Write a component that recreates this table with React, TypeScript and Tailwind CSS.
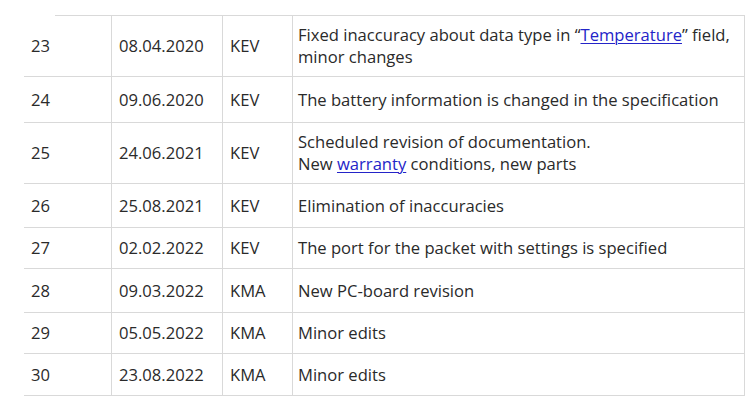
import React from "react";

type Row = { n: string; d: string; a: string; h: string; c: React.ReactNode };

const link = "text-[#2424c8] underline underline-offset-2 decoration-1";

const rows: Row[] = [
  {
    n: "23",
    d: "08.04.2020",
    a: "KEV",
    h: "h-[61px]",
    c: (
      <>
        Fixed inaccuracy about data type in “<span className={link}>Temperature</span>” field,
        <br />
        minor changes
      </>
    ),
  },
  { n: "24", d: "09.06.2020", a: "KEV", h: "h-[46px]", c: "The battery information is changed in the specification" },
  {
    n: "25",
    d: "24.06.2021",
    a: "KEV",
    h: "h-[61px]",
    c: (
      <>
        Scheduled revision of documentation.
        <br />
        New <span className={link}>warranty</span> conditions, new parts
      </>
    ),
  },
  { n: "26", d: "25.08.2021", a: "KEV", h: "h-[44px]", c: "Elimination of inaccuracies" },
  { n: "27", d: "02.02.2022", a: "KEV", h: "h-[41px]", c: "The port for the packet with settings is specified" },
  { n: "28", d: "09.03.2022", a: "KMA", h: "h-[44px]", c: "New PC-board revision" },
  { n: "29", d: "05.05.2022", a: "KMA", h: "h-[41px]", c: "Minor edits" },
  { n: "30", d: "23.08.2022", a: "KMA", h: "h-[42px]", c: "Minor edits" },
];

export default function App() {
  return (
    <div className="w-[750px] h-[401px] bg-white pt-[15px] pl-[24px] text-[#2a2a2a] text-[16.6px] leading-[22px] font-['Open_Sans',sans-serif] overflow-hidden">
      <div className="w-[721px]">
        <div className="grid grid-cols-[88px_111px_70px_452px] h-px">
          <div className="ml-[31px] bg-[#d9d9d9]" />
          <div className="bg-[#d9d9d9]" />
          <div className="bg-[#d9d9d9]" />
          <div className="bg-[#d9d9d9]" />
        </div>
        {rows.map((r) => (
          <div key={r.n} className={`grid grid-cols-[88px_111px_70px_452px] border-b border-[#d9d9d9] ${r.h}`}>
            <div className="flex items-center pl-[7px] border-r border-[#d9d9d9]">{r.n}</div>
            <div className="flex items-center pl-[7px] border-r border-[#d9d9d9]">{r.d}</div>
            <div className="flex items-center pl-[7px] border-r border-[#d9d9d9]">{r.a}</div>
            <div className="flex items-center pl-[5px] border-r border-[#d9d9d9]">
              <div>{r.c}</div>
            </div>
          </div>
        ))}
      </div>
    </div>
  );
}
